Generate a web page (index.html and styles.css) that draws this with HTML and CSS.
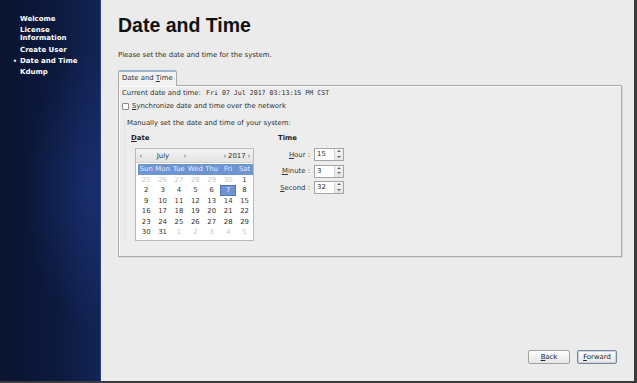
FILE: index.html
```html
<!DOCTYPE html>
<html>
<head>
    <meta charset="UTF-8">
    <title>Date and Time</title>
    <link rel="stylesheet" href="styles.css">
</head>
<body>
    <div id="windowFrame">
        <div id="sidebar">
            <ul class="steps">
                <li>Welcome</li>
                <li>License<br>Information</li>
                <li>Create User</li>
                <li class="current">Date and Time</li>
                <li>Kdump</li>
            </ul>
        </div>
        <div id="main">
            <h1 class="pageTitle">Date and Time</h1>
            <p class="intro">Please set the date and time for the system.</p>

            <div class="tabBar">
                <div class="tab">Date and <u>T</u>ime</div>
            </div>
            <div class="tabPanel">
                <div class="currentRow">Current date and time: <span class="mono">Fri 07 Jul 2017 03:13:15 PM CST</span></div>
                <label class="syncRow"><span class="checkBox"></span><span><u>S</u>ynchronize date and time over the network</span></label>

                <div class="manualFrame">
                    <div class="manualTitle">Manually set the date and time of your system:</div>
                    <div class="manualCols">
                        <div class="dateCol">
                            <div class="colTitle"><u>D</u>ate</div>
                            <div class="calendar">
                                <div class="calHead">
                                    <span class="arrow">‹</span><span class="monthName">July</span><span class="arrow">›</span>
                                    <span class="gap"></span>
                                    <span class="arrow small">‹</span><span class="yearName">2017</span><span class="arrow">›</span>
                                </div>
                                <div class="calGrid" id="calGrid"></div>
                            </div>
                        </div>
                        <div class="timeCol">
                            <div class="colTitle">Time</div>
                            <div class="timeRows">
                                <div class="timeRow"><span class="timeLabel"><u>H</u>our :</span><span class="spin"><span class="spinValue">15</span><span class="spinBtns"><i class="up"></i><i class="down"></i></span></span></div>
                                <div class="timeRow"><span class="timeLabel"><u>M</u>inute :</span><span class="spin"><span class="spinValue">3</span><span class="spinBtns"><i class="up"></i><i class="down"></i></span></span></div>
                                <div class="timeRow"><span class="timeLabel"><u>S</u>econd :</span><span class="spin"><span class="spinValue">32</span><span class="spinBtns"><i class="up"></i><i class="down"></i></span></span></div>
                            </div>
                        </div>
                    </div>
                </div>
            </div>

            <div class="spacer"></div>
            <div class="navButtons">
                <button class="navBtn"><u>B</u>ack</button>
                <button class="navBtn default"><u>F</u>orward</button>
            </div>
        </div>
    </div>

    <script>
        var dayNames = ['Sun', 'Mon', 'Tue', 'Wed', 'Thu', 'Fri', 'Sat'];
        var grid = document.getElementById('calGrid');

        dayNames.forEach(function(name) {
            var cell = document.createElement('span');
            cell.className = 'dayName';
            cell.textContent = name;
            grid.appendChild(cell);
        });

        var days = [];
        for (var i = 25; i <= 30; i++) days.push({ n: i, other: true });
        for (var j = 1; j <= 31; j++) days.push({ n: j, other: false });
        for (var k = 1; k <= 5; k++) days.push({ n: k, other: true });

        days.forEach(function(d) {
            var cell = document.createElement('span');
            cell.className = 'day';
            if (d.other) cell.classList.add('other');
            if (!d.other && d.n === 7) cell.classList.add('selected');
            cell.textContent = d.n;
            grid.appendChild(cell);
        });
    </script>
</body>
</html>
```

FILE: styles.css
```css
html, body {
    margin: 0;
    padding: 0;
}

body {
    width: 637px;
    height: 383px;
    background-color: #3c3c3c;
    font-family: "DejaVu Sans", sans-serif;
    overflow: hidden;
}

#windowFrame {
    display: flex;
    width: 634px;
    height: 381px;
    background-color: #ebebeb;
}

#sidebar {
    width: 100px;
    flex-shrink: 0;
    background:
        radial-gradient(ellipse 70px 140px at 95px 190px, rgba(30, 55, 130, 0.55), rgba(30, 55, 130, 0) 100%),
        linear-gradient(to right, #0a1430 0%, #0d1a3f 60%, #132457 100%);
    border-right: 1px solid #2a3f80;
}

.steps {
    list-style: none;
    margin: 0;
    padding: 15px 0 0 20px;
    color: #fff;
    font-size: 7px;
    font-weight: bold;
    line-height: 8px;
}

.steps li {
    margin-bottom: 3.3px;
    position: relative;
}

.steps li.current::before {
    content: "•";
    position: absolute;
    left: -7px;
    font-size: 6px;
}

#main {
    flex: 1;
    display: flex;
    flex-direction: column;
    padding: 0 12px 17px 17px;
    color: #2e2e2e;
    font-size: 6.9px;
}

.pageTitle {
    margin: 12px 0 0 0;
    font-family: "Liberation Sans", Arial, sans-serif;
    font-size: 19.5px;
    font-weight: bold;
    color: #111;
    line-height: 26px;
}

.intro {
    margin: 13px 0 0 0;
    line-height: 9px;
}

.tabBar {
    margin-top: 10px;
    display: flex;
}

.tab {
    padding: 2px 3px 3px 3px;
    border: 1px solid #a9a9a9;
    border-top: 2px solid #9fb3d1;
    border-bottom: none;
    border-radius: 2px 2px 0 0;
    background-color: #f2f2f2;
    line-height: 9px;
    margin-bottom: -1px;
    position: relative;
    z-index: 1;
}

.tabPanel {
    border: 1px solid #a9a9a9;
    box-shadow: inset 1px 1px 0 #fafafa, 1px 1px 0 #dadada;
    background-color: #ededed;
    height: 167px;
    padding: 3px 3px 0 3px;
}

.currentRow {
    line-height: 9px;
}

.mono {
    font-family: "DejaVu Sans Mono", monospace;
    font-size: 6.6px;
    margin-left: 3px;
}

.syncRow {
    display: flex;
    align-items: center;
    gap: 3px;
    margin-top: 4px;
    line-height: 9px;
}

.checkBox {
    width: 5px;
    height: 5px;
    border: 1px solid #8a8a8a;
    background-color: #fafafa;
    border-radius: 1px;
}

.manualFrame {
    margin: 4px 0 0 2px;
    padding: 4px 0 0 2px;
    border-left: 1px solid #e2e2e2;
}

.manualTitle {
    line-height: 9px;
}

.manualCols {
    display: flex;
    margin-top: 6px;
}

.colTitle {
    font-weight: bold;
    line-height: 9px;
    color: #222;
}

.dateCol {
    width: 147px;
    padding-left: 4px;
}

.calendar {
    margin: 5px 0 0 4px;
    width: 117px;
    border: 1px solid #b9b9b9;
    background-color: #fff;
    padding-bottom: 2px;
}

.calHead {
    display: flex;
    align-items: center;
    height: 13px;
    background: linear-gradient(#f3f3f3, #e3e3e3);
    border-bottom: 1px solid #d0d0d0;
    padding: 0 0 0 1px;
}

.calHead .arrow {
    width: 8px;
    text-align: center;
    color: #555;
}

.calHead .arrow.small {
    width: 6px;
}

.calHead .monthName {
    width: 36px;
    text-align: center;
}

.calHead .gap {
    flex: 1;
}

.calHead .yearName {
    width: 17px;
    text-align: center;
}

.calGrid {
    display: grid;
    grid-template-columns: repeat(7, 16.4px);
    grid-auto-rows: 10.5px;
    padding: 0 1px 0 2px;
    margin-top: 1px;
}

.calGrid span {
    text-align: center;
    line-height: 10.5px;
}

.dayName {
    background-color: #6e94d2;
    color: #e4ecff;
}

.day {
    color: #333;
}

.day.other {
    color: #c8c8c8;
}

.day.selected {
    background-color: #6e94d2;
    color: #e8efff;
    border: 1px solid #5577b5;
    line-height: 8.5px !important;
}

.timeCol {
    width: 100px;
}

.timeRows {
    display: flex;
    flex-direction: column;
    gap: 3.5px;
    margin-top: 5px;
    width: 66px;
}

.timeRow {
    display: flex;
    justify-content: flex-end;
    align-items: center;
    gap: 4px;
}

.timeLabel {
    color: #333;
}

.spin {
    display: flex;
    width: 28px;
    height: 11px;
    border: 1px solid #a4a4a4;
    background-color: #fff;
}

.spinValue {
    flex: 1;
    padding-left: 2px;
    line-height: 11px;
}

.spinBtns {
    width: 8px;
    display: flex;
    flex-direction: column;
    border-left: 1px solid #d4d4d4;
    background: linear-gradient(#f6f6f6, #e4e4e4);
}

.spinBtns i {
    flex: 1;
    position: relative;
}

.spinBtns i::after {
    content: "";
    position: absolute;
    left: 2px;
    top: 1px;
    border-left: 2px solid transparent;
    border-right: 2px solid transparent;
}

.spinBtns .up::after {
    border-bottom: 2px solid #666;
}

.spinBtns .down::after {
    border-top: 2px solid #666;
}

.spacer {
    flex: 1;
}

.navButtons {
    display: flex;
    justify-content: flex-end;
    gap: 7px;
    padding-right: 5px;
}

.navBtn {
    height: 14px;
    padding: 0;
    font-family: "DejaVu Sans", sans-serif;
    font-size: 6.9px;
    color: #222;
    border: 1px solid #a2a2a2;
    border-radius: 2px;
    background: linear-gradient(#fdfdfd, #e6e6e6);
    width: 42px;
}

.navBtn.default {
    width: 40px;
    border-color: #7b8799;
    box-shadow: inset 0 0 0 1px #c9d3e3;
}
```
